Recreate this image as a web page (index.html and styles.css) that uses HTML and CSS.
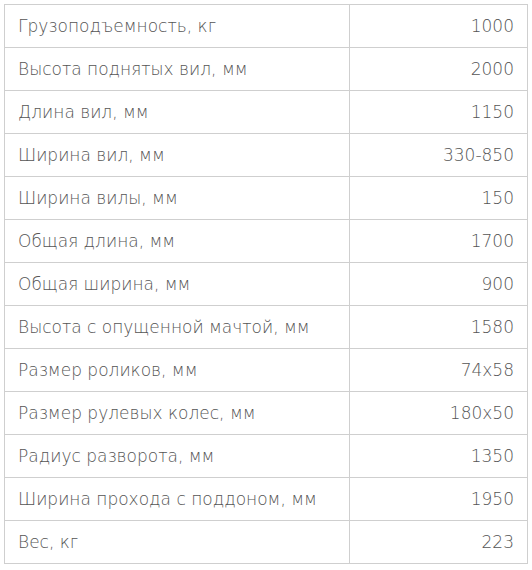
FILE: index.html
```html
<!DOCTYPE html>
<html lang="ru">
<head>
<meta charset="utf-8">
<link rel="stylesheet" href="styles.css">
</head>
<body>
<table class="specs">
<tbody>
<tr><td class="name">Грузоподъемность, кг</td><td class="val">1000</td></tr>
<tr><td class="name">Высота поднятых вил, мм</td><td class="val">2000</td></tr>
<tr><td class="name">Длина вил, мм</td><td class="val">1150</td></tr>
<tr><td class="name">Ширина вил, мм</td><td class="val">330-850</td></tr>
<tr><td class="name">Ширина вилы, мм</td><td class="val">150</td></tr>
<tr><td class="name">Общая длина, мм</td><td class="val">1700</td></tr>
<tr><td class="name">Общая ширина, мм</td><td class="val">900</td></tr>
<tr><td class="name">Высота с опущенной мачтой, мм</td><td class="val">1580</td></tr>
<tr><td class="name">Размер роликов, мм</td><td class="val">74x58</td></tr>
<tr><td class="name">Размер рулевых колес, мм</td><td class="val">180x50</td></tr>
<tr><td class="name">Радиус разворота, мм</td><td class="val">1350</td></tr>
<tr><td class="name">Ширина прохода с поддоном, мм</td><td class="val">1950</td></tr>
<tr><td class="name">Вес, кг</td><td class="val">223</td></tr>
</tbody>
</table>
</body>
</html>
```
FILE: styles.css
```css
html, body {
  margin: 0;
  padding: 0;
  background: #fff;
}
body {
  padding: 4px 0 0 4px;
  font-family: "DejaVu Sans", "Liberation Sans", sans-serif;
  font-weight: 200;
  color: #555;
}
.specs {
  border-collapse: collapse;
  width: 524px;
  table-layout: fixed;
}
.specs td {
  border: 1px solid #cfcfcf;
  padding: 0 13px 0 13px;
  font-size: 17px;
  box-sizing: border-box;
  height: 43px;
  white-space: nowrap;
}
.specs .name {
  width: 345px;
  text-align: left;
}
.specs .val {
  text-align: right;
}
```
